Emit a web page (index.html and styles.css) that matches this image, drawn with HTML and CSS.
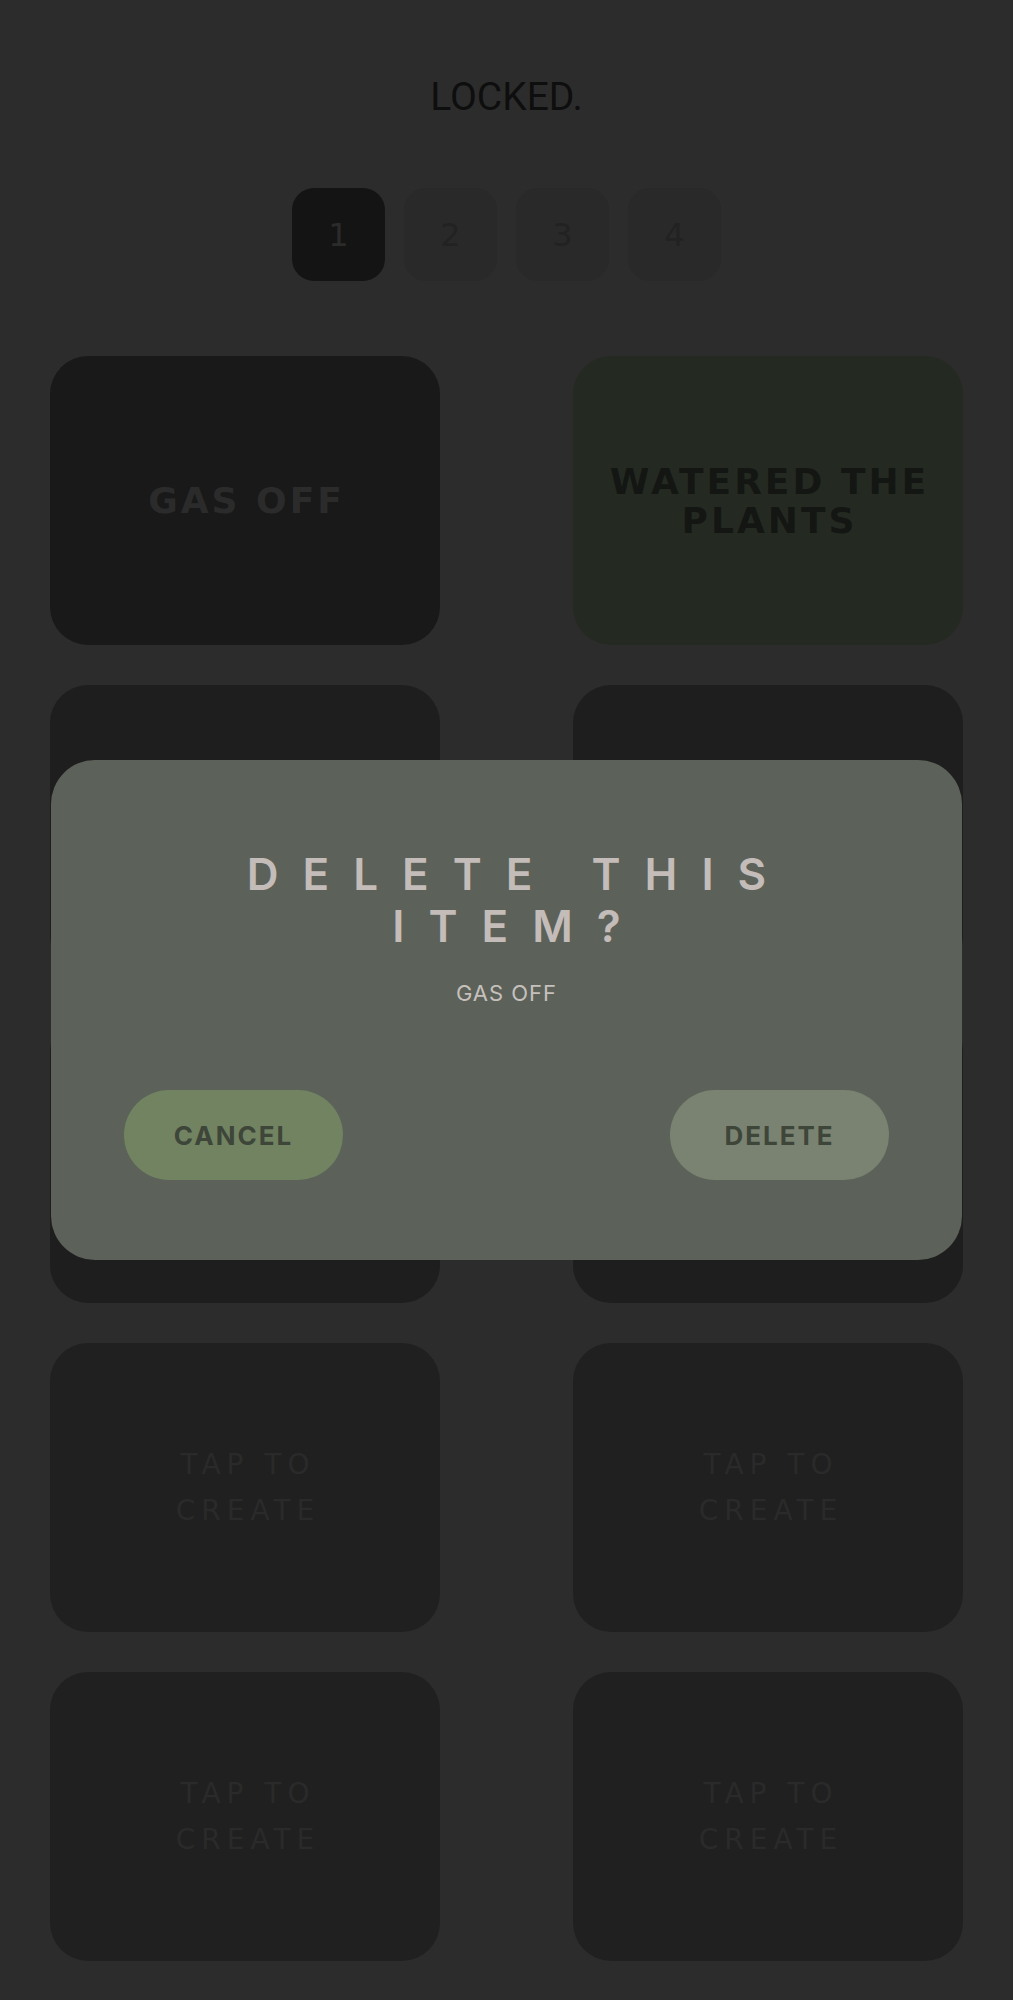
FILE: index.html
```html
<!DOCTYPE html>
<html lang="en">
<head>
<meta charset="utf-8">
<title>Locked</title>
<link rel="stylesheet" href="styles.css">
</head>
<body>
<main class="screen">
  <h1 class="lock-title">LOCKED.</h1>

  <nav class="pages">
    <button class="page page-active">1</button>
    <button class="page">2</button>
    <button class="page">3</button>
    <button class="page">4</button>
  </nav>

  <section class="grid">
    <div class="tile tile-black"><span class="label label-gas">GAS OFF</span></div>
    <div class="tile tile-green"><span class="label label-plants">WATERED THE PLANTS</span></div>
    <div class="tile tile-shaded"></div>
    <div class="tile tile-shaded"></div>
    <div class="tile tile-shaded"></div>
    <div class="tile tile-shaded"></div>
    <div class="tile"><span class="hint">TAP TO<br>CREATE</span></div>
    <div class="tile"><span class="hint">TAP TO<br>CREATE</span></div>
    <div class="tile"><span class="hint">TAP TO<br>CREATE</span></div>
    <div class="tile"><span class="hint">TAP TO<br>CREATE</span></div>
  </section>

  <div class="dialog" role="dialog">
    <h2 class="dialog-title">DELETE THIS<br>ITEM?</h2>
    <p class="dialog-sub">GAS OFF</p>
    <div class="dialog-actions">
      <button class="btn btn-cancel">CANCEL</button>
      <button class="btn btn-delete">DELETE</button>
    </div>
  </div>
</main>
</body>
</html>
```

FILE: styles.css
```css
html, body {
  margin: 0;
  padding: 0;
  background: #2c2c2c;
}

.screen {
  position: relative;
  min-height: 2000px;
  display: flex;
  flex-direction: column;
  align-items: center;
}

.lock-title {
  margin: 74px 0 0;
  font-family: Roboto, "Liberation Sans", sans-serif;
  font-weight: 400;
  font-size: 39px;
  line-height: 46px;
  color: #0e0e0e;
}

.pages {
  margin-top: 68px;
  display: flex;
  gap: 19px;
}

.page {
  width: 93px;
  height: 93px;
  border: none;
  border-radius: 22px;
  background: #292929;
  color: #222222;
  font-family: "DejaVu Sans", sans-serif;
  font-size: 32px;
  font-weight: 400;
  padding: 0;
  display: flex;
  align-items: center;
  justify-content: center;
}

.page-active {
  background: #141414;
  color: #2b2b2b;
}

.grid {
  margin-top: 75px;
  display: grid;
  grid-template-columns: 390px 390px;
  grid-auto-rows: 289px;
  column-gap: 133px;
  row-gap: 40px;
}

.tile {
  background: #202020;
  border-radius: 38px;
  display: flex;
  align-items: center;
  justify-content: center;
  text-align: center;
  padding: 0 24px;
}

.tile-black {
  background: #191919;
}

.tile-green {
  background: #242a21;
}

.tile-shaded {
  background: #1e1e1e;
}

.label {
  font-family: "DejaVu Sans", sans-serif;
  font-weight: 700;
  font-size: 36px;
  line-height: 39px;
  letter-spacing: 3px;
  padding-left: 3px;
}

.label-gas {
  color: #2b2b2b;
}

.label-plants {
  color: #141614;
}

.hint {
  font-family: "DejaVu Sans", sans-serif;
  font-weight: 400;
  font-size: 28px;
  line-height: 46px;
  letter-spacing: 6px;
  padding-left: 6px;
  color: #2a2a2a;
}

.dialog {
  position: absolute;
  left: 51px;
  top: 760px;
  width: 911px;
  height: 500px;
  box-sizing: border-box;
  border-radius: 44px;
  background: #5c625a;
  display: flex;
  flex-direction: column;
  align-items: center;
  padding: 88px 73px 80px;
  text-align: center;
}

.dialog-title {
  margin: 0;
  font-family: Inter, "Liberation Sans", sans-serif;
  font-weight: 600;
  font-size: 44px;
  line-height: 52px;
  letter-spacing: 24px;
  padding-left: 24px;
  color: #c4bcb8;
}

.dialog-sub {
  margin: 28px 0 0;
  font-family: Inter, "Liberation Sans", sans-serif;
  font-weight: 400;
  font-size: 22px;
  line-height: 27px;
  letter-spacing: 1px;
  color: #c6c0bc;
}

.dialog-actions {
  margin-top: auto;
  align-self: stretch;
  display: flex;
  justify-content: space-between;
}

.btn {
  width: 219px;
  height: 90px;
  border: none;
  border-radius: 45px;
  padding: 0;
  font-family: Inter, "Liberation Sans", sans-serif;
  font-weight: 700;
  font-size: 26px;
  letter-spacing: 2px;
  color: #3e4539;
  display: flex;
  align-items: center;
  justify-content: center;
}

.btn-cancel {
  background: #718361;
}

.btn-delete {
  background: #7a8371;
}
```
